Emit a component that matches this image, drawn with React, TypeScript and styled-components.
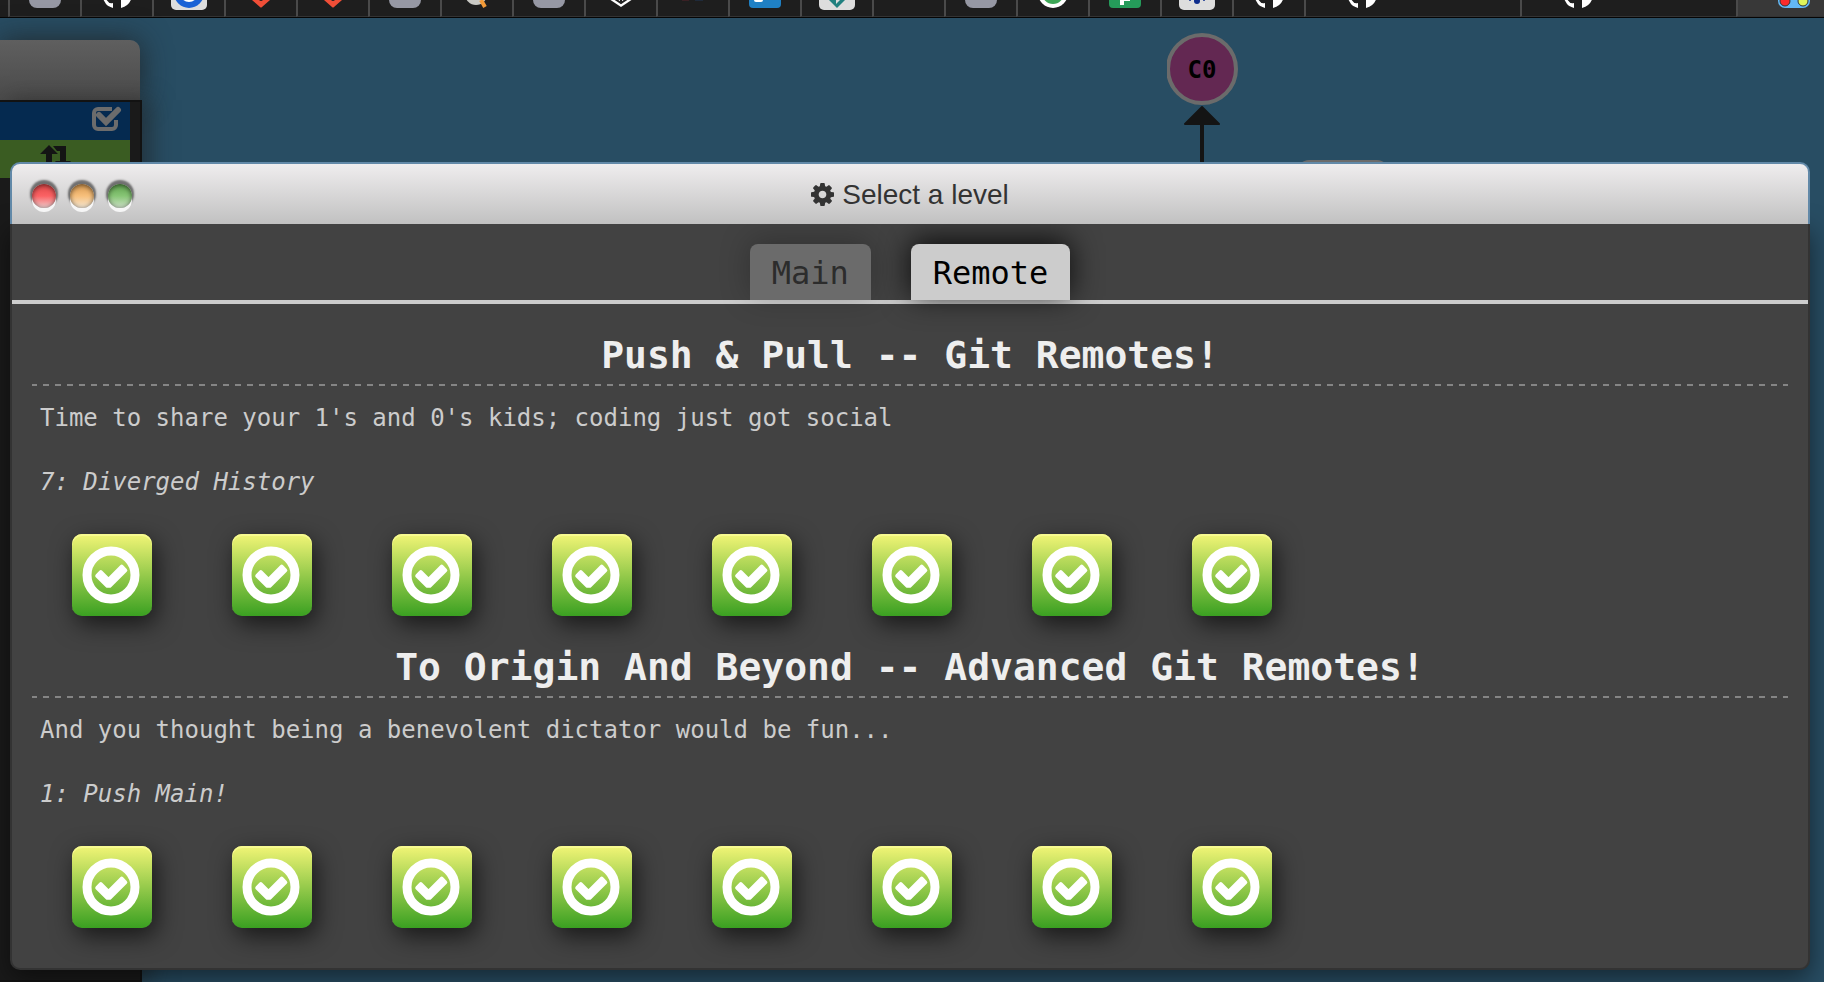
import React from "react";
import styled, { createGlobalStyle } from "styled-components";

const mono = '"DejaVu Sans Mono", "Liberation Mono", monospace';

const GlobalStyle = createGlobalStyle`
  *, *::before, *::after { box-sizing: border-box; }
  body { margin: 0; background: #284d63; font-family: ${mono}; }
  button { font: inherit; border: 0; padding: 0; margin: 0; cursor: pointer; }
`;

const Page = styled.div`
  display: flex;
  flex-direction: column;
  min-height: 100vh;
  overflow: hidden;
`;

const BrowserTabs = styled.header`
  display: flex;
  height: 18px;
  padding-left: 8px;
  background: #1e1e1e;
  border-bottom: 1px solid #050505;
  overflow: hidden;
`;

const BrowserTab = styled.button<{ $wide?: boolean; $active?: boolean }>`
  flex: none;
  display: flex;
  justify-content: ${(p) => (p.$wide ? "flex-start" : "center")};
  width: ${(p) => (p.$wide ? "216px" : "72px")};
  height: 17px;
  padding-left: ${(p) => (p.$wide ? "38px" : "0")};
  background: ${(p) => (p.$active ? "#383838" : "transparent")};
  border-left: 2px solid #4a4a4a;
  border-bottom: 1px solid #333;
`;

const Favicon = styled.svg`
  display: block;
  width: 36px;
  height: 12px;
`;

const Desktop = styled.main`
  position: relative;
  flex: 1;
  display: flex;
  flex-direction: column;
  padding: 144px 14px 12px 10px;
`;

const Terminal = styled.section`
  position: absolute;
  top: 22px;
  left: 0;
  bottom: 0;
  width: 142px;
`;

const TerminalHeader = styled.div`
  width: 140px;
  height: 60px;
  border-top-right-radius: 10px;
  background: linear-gradient(#5f5f5f, #4b4b4b);
  box-shadow: 0 0 30px rgba(30, 30, 30, 0.8);
`;

const TerminalBody = styled.div`
  position: relative;
  height: calc(100% - 60px);
  padding-right: 10px;
  background: #1a1a1a;
  border: 2px solid #121212;
  border-left: 0;
  box-shadow: 10px 0 20px rgba(30, 30, 30, 0.5);
`;

const TerminalRow = styled.div<{ $color: string }>`
  display: flex;
  justify-content: flex-end;
  height: 38px;
  background: ${(p) => p.$color};
`;

const CheckIcon = styled.svg`
  width: 32px;
  height: 32px;
  margin: 2px 8px 0 0;
  fill: none;
  stroke: #6c6c6c;
`;

const SwapIcon = styled.svg`
  width: 32px;
  height: 28px;
  margin: 4px 58px 0 0;
  fill: #141414;
`;

const CommitTree = styled.svg`
  position: absolute;
  top: 0;
  left: 64%;
  width: 240px;
  height: 153px;
`;

const Dialog = styled.section`
  position: relative;
  flex: 1;
  display: flex;
  flex-direction: column;
`;

const TitleBar = styled.header`
  position: relative;
  display: flex;
  align-items: center;
  justify-content: center;
  height: 62px;
  border: 2px solid #6289a8;
  border-bottom: 0;
  border-radius: 10px 10px 0 0;
  background: linear-gradient(#efedee, #c1c1c1);
`;

const Lights = styled.div`
  position: absolute;
  left: 20px;
  top: 20px;
  display: flex;
  gap: 14px;
`;

const Light = styled.button<{ $top: string; $mid: string; $low: string }>`
  width: 24px;
  height: 24px;
  border-radius: 50%;
  background: linear-gradient(${(p) => p.$top}, ${(p) => p.$mid} 50%, ${(p) => p.$low});
  box-shadow: inset 0 1px 5px rgba(0, 0, 0, 0.6), 0 4px 0 #f6f6f6, 0 -2px 2px 2px rgba(0, 0, 0, 0.5);
`;

const DialogTitle = styled.h1`
  display: flex;
  align-items: center;
  gap: 8px;
  margin: 0;
  padding-top: 2px;
  color: #333;
  font: 400 28px/32px "Liberation Sans", Arial, sans-serif;
`;

const CogIcon = styled.svg`
  width: 23px;
  height: 23px;
  margin-bottom: 2px;
  fill: #333;
`;

const DialogBody = styled.div`
  flex: 1;
  padding-bottom: 40px;
  background: #424242;
  border: 2px solid #333;
  border-top: 0;
  border-radius: 0 0 10px 10px;
  box-shadow: 0 8px 26px rgba(0, 0, 0, 0.5);
`;

const LevelTabs = styled.nav`
  display: flex;
  justify-content: center;
  gap: 40px;
  padding-top: 20px;
  border-bottom: 4px solid #ccc;
`;

const LevelTab = styled.button<{ $active?: boolean }>`
  height: 56px;
  padding: 0 22px;
  border-radius: 8px 8px 0 0;
  background: ${(p) => (p.$active ? "#ccc" : "#6b6b6b")};
  color: ${(p) => (p.$active ? "#000" : "#2c2c2c")};
  font: 400 32px/58px ${mono};
  box-shadow: 0 -4px 30px rgba(0, 0, 0, ${(p) => (p.$active ? 0.85 : 0.25)});
`;

const Sections = styled.div`
  display: flex;
  flex-direction: column;
  gap: 26px;
  padding: 26px 20px 0;
`;

const SectionTitle = styled.h2`
  margin: 0;
  padding-bottom: 6px;
  background: repeating-linear-gradient(90deg, #858585 0 5px, transparent 5px 11px, #858585 11px 12px) bottom / 100% 2px no-repeat;
  color: #eee;
  font: 700 38px/50px ${mono};
  text-align: center;
`;

const Line = styled.p<{ $italic?: boolean }>`
  margin: ${(p) => (p.$italic ? "32px" : "16px")} 8px 0;
  color: #ccc;
  font: ${(p) => (p.$italic ? "italic" : "normal")} 400 24px/32px ${mono};
`;

const Levels = styled.div`
  display: flex;
  flex-wrap: wrap;
  gap: 80px;
  margin-top: 36px;
  padding-left: 40px;
`;

const LevelButton = styled.button`
  display: flex;
  align-items: center;
  justify-content: center;
  width: 80px;
  height: 82px;
  border-radius: 10px;
  background: linear-gradient(#f2f576, #3aa021);
  box-shadow: 4px 8px 24px rgba(0, 0, 0, 0.65), inset 0 2px 0 #f7fa90;
`;

const SolvedIcon = styled.svg`
  width: 58px;
  height: 58px;
  margin-right: 2px;
`;

type Icon = "grey" | "github" | "ring" | "git" | "lens" | "cube" | "faint" | "trello" | "gem" | "none" | "dial" | "sheet" | "flower" | "owl";

const GitHub = () => (
  <g>
    <path d="M4 -4a14 14 0 0 0 10 12V3q-4 1-6-2l-2-2H4l3 5q2 3 7 3z" fill="#fff" />
    <path d="M22 8V0q0-3-2-4h13a15 15 0 0 1-11 12z" fill="#fff" />
  </g>
);

const drawings: Record<Icon, React.ReactNode> = {
  none: null,
  grey: <rect x="2" y="-20" width="32" height="28" rx="8" fill="#9698a4" />,
  github: <GitHub />,
  ring: (
    <g>
      <rect x="0" y="-20" width="36" height="30" rx="5" fill="#ddd" />
      <circle cx="18" cy="-7" r="15" fill="#1a62d6" />
      <circle cx="18" cy="-7" r="9" fill="#fff" />
    </g>
  ),
  git: (
    <g>
      <path d="M9 0L17 7q1 1 2 0L27 0V-6H9z" fill="#f04e37" />
      <circle cx="18" cy="-1" r="2" fill="#222" />
    </g>
  ),
  lens: (
    <g>
      <circle cx="17" cy="-6" r="11" fill="#c9c9c4" />
      <path d="M22 0l4 7" stroke="#f29a38" strokeWidth="4" />
    </g>
  ),
  cube: (
    <g>
      <path d="M6 -1l12 8 12-8V-6H6z" fill="#fff" />
      <path d="M12 -1l6 4 6-4M18 3V-6" stroke="#222" strokeWidth="2" fill="none" />
    </g>
  ),
  faint: (
    <g strokeWidth="2">
      <path d="M7 0h7" stroke="#3a2024" />
      <path d="M20 0h8" stroke="#1f2a3a" />
    </g>
  ),
  trello: (
    <g>
      <rect x="2" y="-20" width="32" height="28" rx="4" fill="#1f80c4" />
      <rect x="7" y="-8" width="9" height="10" rx="2" fill="#fff" />
    </g>
  ),
  gem: (
    <g>
      <rect x="0" y="-20" width="36" height="30" rx="5" fill="#ddd" />
      <path d="M10 0l8 8 8-8V-3H10z" fill="#21807f" />
      <path d="M17 -3v7l4-4v-3z" fill="#ddd" />
    </g>
  ),
  dial: (
    <g>
      <circle cx="18" cy="-7" r="15" fill="#fff" />
      <circle cx="18" cy="-7" r="11" fill="#3ea757" />
    </g>
  ),
  sheet: (
    <g>
      <rect x="2" y="-20" width="32" height="28" rx="4" fill="#259b5a" />
      <path d="M15 -4V5M15 -1h8" stroke="#fff" strokeWidth="4" />
    </g>
  ),
  flower: (
    <g>
      <rect x="0" y="-20" width="36" height="30" rx="5" fill="#ddd" />
      <circle cx="18" cy="1" r="3" fill="#0d2c8c" />
      <circle cx="11" cy="0" r="1" fill="#0d2c8c" />
      <circle cx="25" cy="0" r="1" fill="#0d2c8c" />
    </g>
  ),
  owl: (
    <g>
      <rect x="2" y="-20" width="32" height="28" rx="7" fill="#63b8f5" />
      <circle cx="9" cy="1" r="5" fill="#fb2c2c" stroke="#333" strokeWidth="1" />
      <circle cx="27" cy="1" r="5" fill="#e0f55a" stroke="#333" strokeWidth="1" />
    </g>
  ),
};

const icons: Icon[] = [
  "grey", "github", "ring", "git", "git", "grey", "lens", "grey", "cube", "faint",
  "trello", "gem", "none", "grey", "dial", "sheet", "flower", "github",
];

const wideIcons: Icon[] = ["github", "github", "owl"];

const sections = [
  {
    title: "Push & Pull -- Git Remotes!",
    about: "Time to share your 1's and 0's kids; coding just got social",
    level: "7: Diverged History",
  },
  {
    title: "To Origin And Beyond -- Advanced Git Remotes!",
    about: "And you thought being a benevolent dictator would be fun...",
    level: "1: Push Main!",
  },
];

const levelNumbers = [1, 2, 3, 4, 5, 6, 7, 8];

export default function App() {
  return (
    <Page>
      <GlobalStyle />
      <BrowserTabs>
        {icons.map((icon, i) => (
          <BrowserTab key={i} aria-label={`Tab ${i + 1}`}>
            <Favicon viewBox="0 0 36 12">{drawings[icon]}</Favicon>
          </BrowserTab>
        ))}
        {wideIcons.map((icon, i) => (
          <BrowserTab key={i} $wide $active={icon === "owl"} aria-label={`Wide tab ${i + 1}`}>
            <Favicon viewBox="0 0 36 12">{drawings[icon]}</Favicon>
          </BrowserTab>
        ))}
      </BrowserTabs>
      <Desktop>
        <Terminal>
          <TerminalHeader />
          <TerminalBody>
            <TerminalRow $color="#052a50">
              <CheckIcon viewBox="0 0 32 32">
                <path d="M22 5H8a4 4 0 0 0-4 4V21a4 4 0 0 0 4 4H22a4 4 0 0 0 4-4V16" strokeWidth="4" />
                <path d="M9 11L16 18L28 6" strokeWidth="6" strokeLinecap="round" />
              </CheckIcon>
            </TerminalRow>
            <TerminalRow $color="#3a5c22">
              <SwapIcon viewBox="0 0 32 28">
                <path d="M9 1L18 10H12V28H6V10H0zM13 2H26V17H31L23 26L15 17H20V7H17z" />
              </SwapIcon>
            </TerminalRow>
          </TerminalBody>
        </Terminal>
        <CommitTree viewBox="0 0 240 153">
          <rect x="130" y="142" width="92" height="30" rx="12" fill="#6b6b6b" />
          <path d="M35 100V153" stroke="#141414" strokeWidth="4" />
          <path d="M35 89L52 106H18z" fill="#141414" stroke="#141414" strokeWidth="2" strokeLinejoin="round" />
          <circle cx="35" cy="51" r="34" fill="#632852" stroke="#6b6b6b" strokeWidth="4" />
          <text x="35" y="60" textAnchor="middle" fontFamily={mono} fontWeight="700" fontSize="24">C0</text>
        </CommitTree>
        <Dialog aria-labelledby="dialog-title">
          <TitleBar>
            <Lights>
              <Light aria-label="Close" $top="#e04848" $mid="#fb6264" $low="#f0d0d0" />
              <Light aria-label="Minimize" $top="#d99a50" $mid="#f7c07c" $low="#f4e8d6" />
              <Light aria-label="Zoom" $top="#5fa34e" $mid="#88c676" $low="#cfe2ca" />
            </Lights>
            <DialogTitle id="dialog-title">
              <CogIcon viewBox="128 128 1536 1536">
                <path d="M1152 896q0-106-75-181t-181-75-181 75-75 181 75 181 181 75 181-75 75-181zm512-109v222q0 12-8 23t-20 13l-185 28q-19 54-39 91 35 50 107 138 10 12 10 25t-9 23q-27 37-99 108t-94 71q-12 0-26-9l-138-108q-44 23-91 38-16 136-29 186-7 28-36 28h-222q-14 0-24.5-8.5t-11.5-21.5l-28-184q-49-16-90-37l-141 107q-10 9-25 9-14 0-25-11-126-114-165-168-7-10-7-23 0-12 8-23 15-21 51-66.5t54-70.5q-27-50-41-99l-183-27q-13-2-21-12.5t-8-23.5v-222q0-12 8-23t19-13l186-28q14-46 39-92-40-57-107-138-10-12-10-24 0-10 9-23 26-36 98.5-107.5t94.5-71.5q13 0 26 10l138 107q44-23 91-38 16-136 29-186 7-28 36-28h222q14 0 24.5 8.5t11.5 21.5l28 184q49 16 90 37l142-107q9-9 24-9 13 0 25 10 129 119 165 170 7 8 7 22 0 12-8 23-15 21-51 66.5t-54 70.5q26 50 41 98l183 28q13 2 21 12.5t8 23.5z" />
              </CogIcon>
              Select a level
            </DialogTitle>
          </TitleBar>
          <DialogBody>
            <LevelTabs>
              <LevelTab>Main</LevelTab>
              <LevelTab $active>Remote</LevelTab>
            </LevelTabs>
            <Sections>
              {sections.map((section) => (
                <section key={section.title}>
                  <SectionTitle>{section.title}</SectionTitle>
                  <Line>{section.about}</Line>
                  <Line $italic>{section.level}</Line>
                  <Levels>
                    {levelNumbers.map((n) => (
                      <LevelButton key={n} aria-label={`Level ${n}, solved`}>
                        <SolvedIcon viewBox="0 0 58 58">
                          <circle cx="29" cy="29" r="24" fill="none" stroke="#fff" strokeWidth="9" />
                          <path d="M18.8 26.2L26.5 34L39.7 20.7L43.3 24.3L27.7 39.8H25.3L15.2 29.8z" fill="#fff" stroke="#fff" strokeWidth="4" strokeLinejoin="round" />
                        </SolvedIcon>
                      </LevelButton>
                    ))}
                  </Levels>
                </section>
              ))}
            </Sections>
          </DialogBody>
        </Dialog>
      </Desktop>
    </Page>
  );
}
